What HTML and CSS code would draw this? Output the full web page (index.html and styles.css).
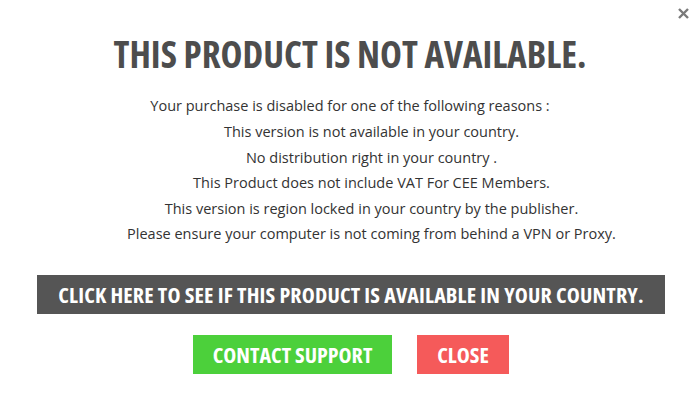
FILE: index.html
```html
<!DOCTYPE html>
<html>
<head>
<meta charset="utf-8">
<link rel="stylesheet" href="styles.css">
</head>
<body>
<div class="modal">
  <button class="close-x" aria-label="close">
    <svg width="11" height="11" viewBox="0 0 11 11"><path d="M1 1L10 10M10 1L1 10" stroke="#7a7a7a" stroke-width="2.4" stroke-linecap="butt"/></svg>
  </button>
  <h1 class="title">THIS PRODUCT IS NOT AVAILABLE.</h1>
  <p class="intro">Your purchase is disabled for one of the following reasons :</p>
  <ul class="reasons">
    <li>This version is not available in your country.</li>
    <li>No distribution right in your country .</li>
    <li>This Product does not include VAT For CEE Members.</li>
    <li>This version is region locked in your country by the publisher.</li>
    <li>Please ensure your computer is not coming from behind a VPN or Proxy.</li>
  </ul>
  <div class="check">CLICK HERE TO SEE IF THIS PRODUCT IS AVAILABLE IN YOUR COUNTRY.</div>
  <div class="actions">
    <span class="btn btn-green">CONTACT SUPPORT</span>
    <span class="btn btn-red">CLOSE</span>
  </div>
</div>
</body>
</html>
```
FILE: styles.css
```css
html, body {
  margin: 0;
  padding: 0;
  background: #fff;
}
.modal {
  position: relative;
  width: 700px;
  height: 407px;
  box-sizing: border-box;
  padding-top: 31px;
  text-align: center;
  font-family: "Open Sans", "Liberation Sans", sans-serif;
  color: #333;
}
.close-x {
  position: absolute;
  top: 8px;
  right: 11px;
  border: 0;
  background: none;
  padding: 0;
  width: 11px;
  height: 11px;
  display: block;
}
.close-x svg { display: block; }
.title {
  margin: 0;
  font-family: "Open Sans", sans-serif;
  font-stretch: condensed;
  font-weight: 700;
  font-size: 37px;
  line-height: 46px;
  color: #4d4d4d;
}
.intro {
  margin: 16px 0 0;
  font-size: 14.5px;
  line-height: 26px;
}
.reasons {
  list-style: none;
  margin: 0;
  padding: 0 0 0 43px;
  font-size: 14.5px;
  line-height: 25.6px;
}
.check {
  margin: 28px 35px 0 37px;
  background: #555;
  color: #fff;
  font-family: "Open Sans", sans-serif;
  font-stretch: condensed;
  font-weight: 700;
  font-size: 22px;
  letter-spacing: 0.15px;
  line-height: 39px;
  height: 39px;
}
.actions {
  display: flex;
  justify-content: center;
  gap: 25px;
  margin-top: 21px;
  padding-left: 2px;
}
.btn {
  display: block;
  height: 39px;
  line-height: 39px;
  color: #fff;
  font-family: "Open Sans", sans-serif;
  font-stretch: condensed;
  font-weight: 700;
  font-size: 22px;
}
.btn-green {
  width: 199px;
  background: #4cd03b;
}
.btn-red {
  width: 92px;
  background: #f55a5a;
}
```
